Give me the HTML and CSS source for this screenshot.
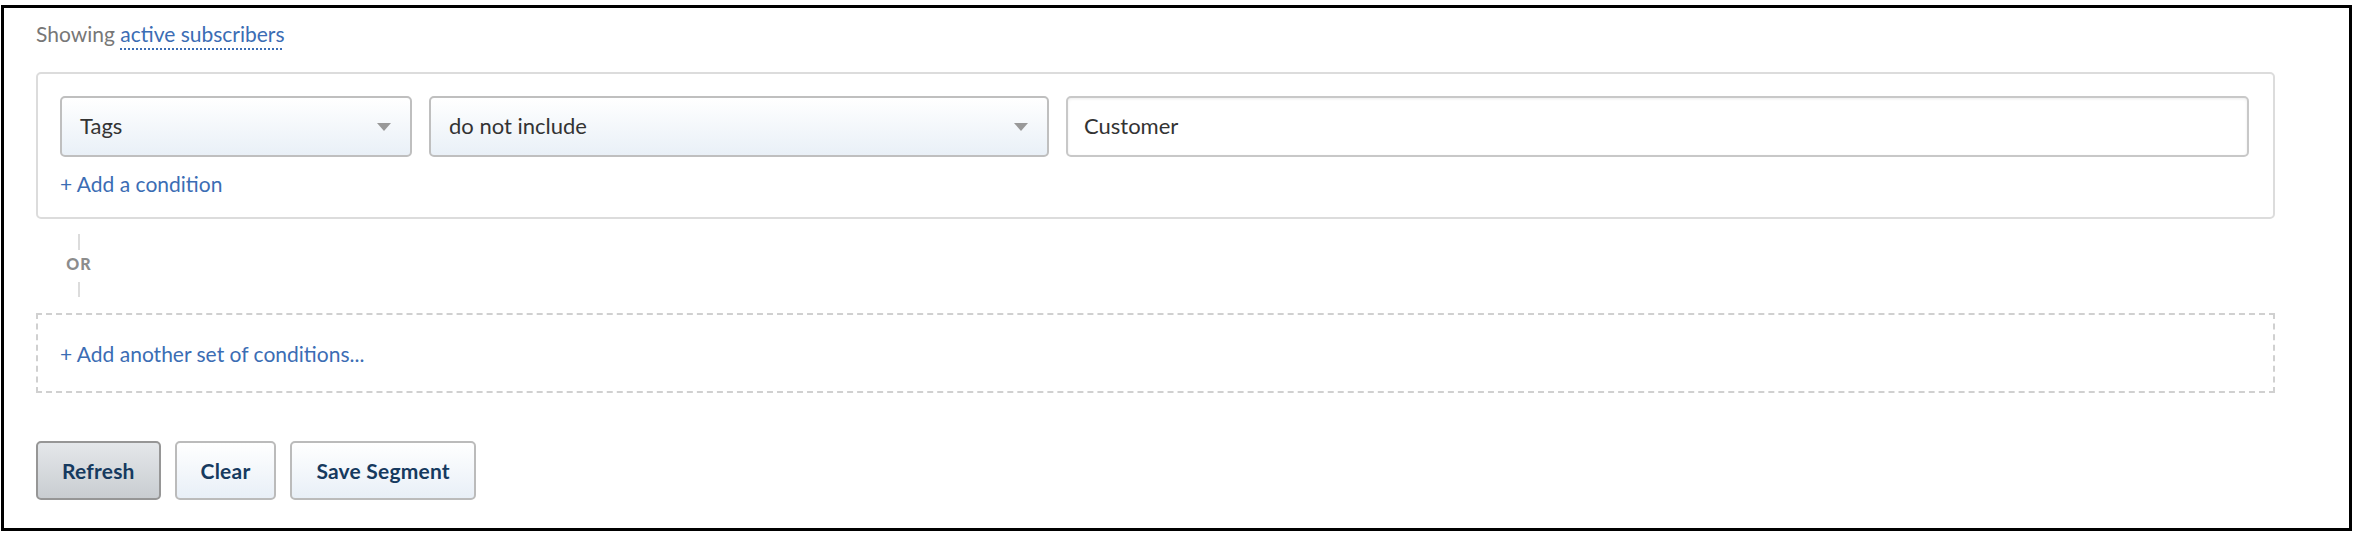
FILE: index.html
```html
<!DOCTYPE html>
<html lang="en">
<head>
<meta charset="utf-8">
<title>Segment conditions</title>
<link rel="stylesheet" href="styles.css">
</head>
<body>
<div class="frame">
  <p class="showing">Showing <a class="dotted-link" href="#">active subscribers</a></p>

  <div class="cond-set">
    <div class="cond-row">
      <div class="select">
        <span class="select-label">Tags</span>
        <span class="caret"></span>
      </div>
      <div class="select">
        <span class="select-label">do not include</span>
        <span class="caret"></span>
      </div>
      <div class="text-input">Customer</div>
    </div>
    <a class="add-link" href="#">+ Add a condition</a>
  </div>

  <div class="or-sep">
    <span class="or-line"></span>
    <span class="or-text">OR</span>
    <span class="or-line or-line-bottom"></span>
  </div>

  <div class="add-set">
    <a class="add-link" href="#">+ Add another set of conditions...</a>
  </div>

  <div class="actions">
    <button class="btn btn-primary" type="button">Refresh</button>
    <button class="btn" type="button">Clear</button>
    <button class="btn" type="button">Save Segment</button>
  </div>
</div>
</body>
</html>
```

FILE: styles.css
```css
* { box-sizing: border-box; }

html, body {
  margin: 0;
  padding: 0;
  background: #fff;
}

body {
  font-family: Lato, "Open Sans", "Liberation Sans", sans-serif;
  color: #333;
}

.frame {
  margin: 5px 4px 0 1px;
  height: 526px;
  border: 3px solid #000;
  padding: 13px 74px 0 32px;
}

.showing {
  margin: 0;
  font-size: 21px;
  line-height: 25px;
  color: #777;
}

.dotted-link {
  color: #3b6db4;
  text-decoration: underline dotted #3b6db4;
  text-decoration-thickness: 2px;
  text-underline-offset: 6px;
}

.cond-set {
  margin-top: 26px;
  border: 2px solid #dcdcdc;
  border-radius: 5px;
  padding: 22px 24px 21px 22px;
}

.cond-row {
  display: grid;
  grid-template-columns: 352px 620px 1fr;
  column-gap: 17px;
}

.select {
  height: 61px;
  border: 2px solid #bfbfbf;
  border-radius: 5px;
  background: linear-gradient(#ffffff, #e9f0f7);
  display: flex;
  align-items: center;
  justify-content: space-between;
  padding: 0 19px 3px 18px;
  font-size: 22px;
  color: #333;
}

.caret {
  width: 0;
  height: 0;
  margin-top: 3px;
  border-left: 7.5px solid transparent;
  border-right: 7.5px solid transparent;
  border-top: 8px solid #999;
}

.text-input {
  height: 61px;
  border: 2px solid #c8c8c8;
  border-radius: 5px;
  background: #fff;
  box-shadow: inset 0 1px 3px rgba(0, 0, 0, 0.08);
  display: flex;
  align-items: center;
  padding: 0 17px 3px 16px;
  font-size: 22px;
  color: #333;
}

.add-link {
  display: inline-block;
  font-size: 21px;
  line-height: 25px;
  color: #3b6db4;
  text-decoration: none;
}

.cond-set .add-link {
  margin-top: 14px;
}

.or-sep {
  display: flex;
  flex-direction: column;
  align-items: center;
  width: 86px;
  padding-top: 15px;
}

.or-line {
  display: block;
  width: 2px;
  height: 16px;
  background: #dcdcdc;
}

.or-line-bottom {
  height: 15px;
}

.or-text {
  display: block;
  margin: 5px 0 9px;
  font-size: 16px;
  line-height: 18px;
  font-weight: 900;
  letter-spacing: 1px;
  color: #8c8c8c;
}

.add-set {
  margin-top: 16px;
  height: 80px;
  border: 2px dashed #d0d0d0;
  display: flex;
  align-items: center;
  padding: 0 22px;
}

.actions {
  margin-top: 48px;
  display: flex;
  gap: 14px;
}

.btn {
  height: 59px;
  border: 2px solid #bbbbbb;
  border-radius: 5px;
  background: linear-gradient(#ffffff, #e8eff7);
  padding: 0 24px;
  font-family: Lato, "Open Sans", "Liberation Sans", sans-serif;
  font-size: 21px;
  font-weight: 700;
  letter-spacing: 0.2px;
  color: #163a5f;
}

.btn-primary {
  border-color: #969696;
  background: linear-gradient(#e4e7ea, #c9cdd1);
}
```
